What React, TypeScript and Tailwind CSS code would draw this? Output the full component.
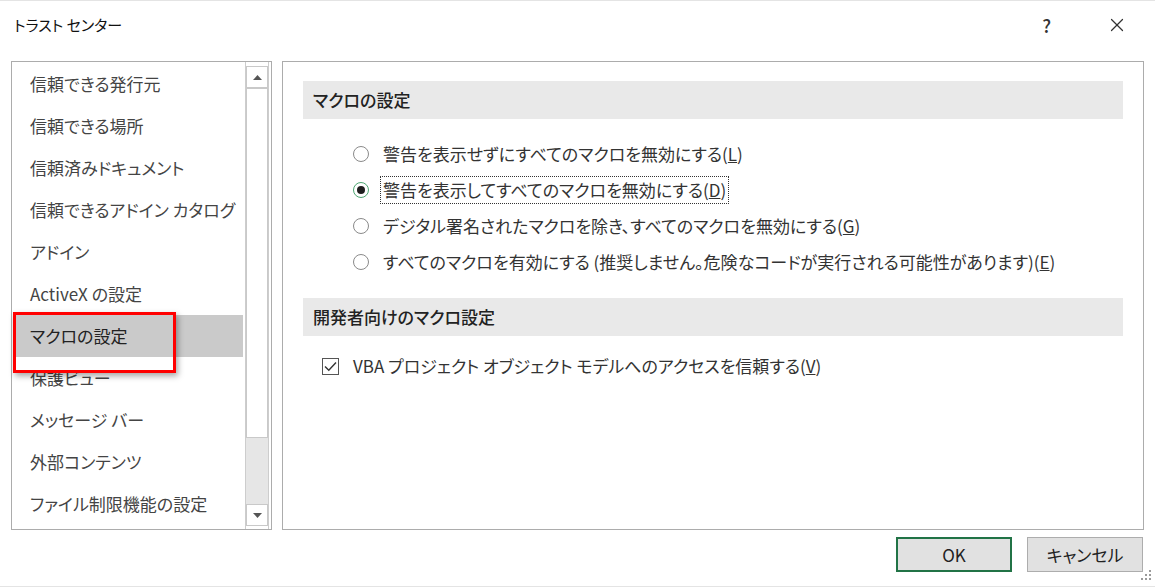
import { X } from "lucide-react";

const navItems = [
  "信頼できる発行元",
  "信頼できる場所",
  "信頼済みドキュメント",
  "信頼できるアドイン カタログ",
  "アドイン",
  "ActiveX の設定",
  "マクロの設定",
  "保護ビュー",
  "メッセージ バー",
  "外部コンテンツ",
  "ファイル制限機能の設定",
];

const macroOptions = [
  { label: "警告を表示せずにすべてのマクロを無効にする", key: "L", checked: false },
  { label: "警告を表示してすべてのマクロを無効にする", key: "D", checked: true },
  { label: "デジタル署名されたマクロを除き、すべてのマクロを無効にする", key: "G", checked: false },
  { label: "すべてのマクロを有効にする (推奨しません。危険なコードが実行される可能性があります)", key: "E", checked: false },
];

function Radio({ checked }: { checked: boolean }) {
  return (
    <span
      className={
        checked
          ? "w-[16px] h-[16px] rounded-full border border-[#4ea672] bg-white flex items-center justify-center shrink-0"
          : "w-[16px] h-[16px] rounded-full border border-[#8a8a8a] bg-white shrink-0"
      }
    >
      {checked && <span className="w-[8px] h-[8px] rounded-full bg-[#1f1f1f]" />}
    </span>
  );
}

export default function App() {
  return (
    <div className="w-[1155px] h-[587px] bg-white relative overflow-hidden border-t border-b border-[#e4e4e4] text-[#2a2a2a] font-['Noto_Sans_CJK_JP','Noto_Sans',sans-serif] [font-feature-settings:'palt']">
      {/* title bar */}
      <div className="h-[60px] flex items-start justify-between pl-[14px] pt-[12px]">
        <div className="text-[15px] leading-[24px] text-[#111]">トラスト センター</div>
        <div className="flex items-center h-[24px] pr-[27px]">
          <span className="text-[18px] font-medium text-[#333] mr-[55px]">?</span>
          <X size={22} strokeWidth={1.3} className="text-[#333]" />
        </div>
      </div>

      {/* body */}
      <div className="flex gap-[10px] px-[11px] h-[469px]">
        {/* left list */}
        <div className="w-[261px] border border-[#acacac] flex pl-[2px]">
          <div className="w-[229px] pt-[1px]">
            {navItems.map((item) => (
              <div
                key={item}
                className={
                  item === "マクロの設定"
                    ? "h-[42px] flex items-center pl-[16px] text-[17px] bg-[#cacaca] text-[#222]"
                    : "h-[42px] flex items-center pl-[16px] text-[17px] text-[#444]"
                }
              >
                {item}
              </div>
            ))}
          </div>
          <div className="ml-[2px] w-[24px] border-x border-[#cdcdcd] flex flex-col pt-[4px] pb-[3px]">
            <div className="h-[22px] border border-[#c9c9c9] bg-white flex items-center justify-center">
              <svg width="9" height="5" viewBox="0 0 9 5"><path d="M0 5 L4.5 0 L9 5 Z" fill="#555" /></svg>
            </div>
            <div className="h-[350px] border border-[#c9c9c9] bg-white" />
            <div className="flex-1 bg-[#e6e6e6]" />
            <div className="h-[22px] border border-[#c9c9c9] bg-white flex items-center justify-center">
              <svg width="9" height="5" viewBox="0 0 9 5"><path d="M0 0 L4.5 5 L9 0 Z" fill="#555" /></svg>
            </div>
          </div>
        </div>

        {/* right panel */}
        <div className="flex-1 border border-[#acacac] pt-[19px] px-[20px]">
          <div className="h-[38px] bg-[#e9e9e9] flex items-center pl-[10px] text-[17px] font-medium text-[#222]">
            マクロの設定
          </div>
          <div className="mt-[17px] pl-[50px]">
            {macroOptions.map((opt) => (
              <div key={opt.key} className="h-[36px] flex items-center">
                <Radio checked={opt.checked} />
                <span
                  className={
                    opt.checked
                      ? "ml-[11px] px-[2px] border border-dotted border-[#333] text-[17px] leading-[26px] text-[#333]"
                      : "ml-[11px] px-[2px] border border-transparent text-[17px] leading-[26px] text-[#333]"
                  }
                >
                  {opt.label}(<u>{opt.key}</u>)
                </span>
              </div>
            ))}
          </div>

          <div className="mt-[18px] h-[38px] bg-[#e9e9e9] flex items-center pl-[10px] text-[17px] font-medium text-[#222]">
            開発者向けのマクロ設定
          </div>
          <div className="mt-[12px] h-[36px] flex items-center pl-[19px]">
            <span className="w-[17px] h-[17px] border border-[#555] bg-white flex items-center justify-center shrink-0">
              <svg width="13" height="11" viewBox="0 0 13 11">
                <path d="M1 5.5 L4.8 9.3 L12 1.5" fill="none" stroke="#333" strokeWidth="1.4" />
              </svg>
            </span>
            <span className="ml-[14px] text-[17px] text-[#333]">
              VBA プロジェクト オブジェクト モデルへのアクセスを信頼する(<u>V</u>)
            </span>
          </div>
        </div>
      </div>

      {/* buttons */}
      <div className="flex justify-end gap-[15px] pr-[12px] pt-[7px]">
        <button className="w-[116px] h-[35px] border-2 border-[#217346] bg-[#e1e1e1] text-[17px] text-[#222]">
          OK
        </button>
        <button className="w-[116px] h-[35px] border border-[#adadad] bg-[#e1e1e1] text-[17px] text-[#222]">
          キャンセル
        </button>
      </div>

      {/* resize grip */}
      <div className="absolute right-[4px] bottom-[6px] grid grid-cols-3 gap-[2px] w-[10px]">
        <span />
        <span />
        <span className="w-[2px] h-[2px] bg-[#9a9a9a]" />
        <span />
        <span className="w-[2px] h-[2px] bg-[#9a9a9a]" />
        <span className="w-[2px] h-[2px] bg-[#9a9a9a]" />
        <span className="w-[2px] h-[2px] bg-[#9a9a9a]" />
        <span className="w-[2px] h-[2px] bg-[#9a9a9a]" />
        <span className="w-[2px] h-[2px] bg-[#9a9a9a]" />
      </div>

      {/* annotation highlight */}
      <div className="absolute left-[13px] top-[311px] w-[163px] h-[61px] border-[3px] border-[#ff0000] shadow-[2px_3px_6px_rgba(0,0,0,0.35)]" />
    </div>
  );
}
